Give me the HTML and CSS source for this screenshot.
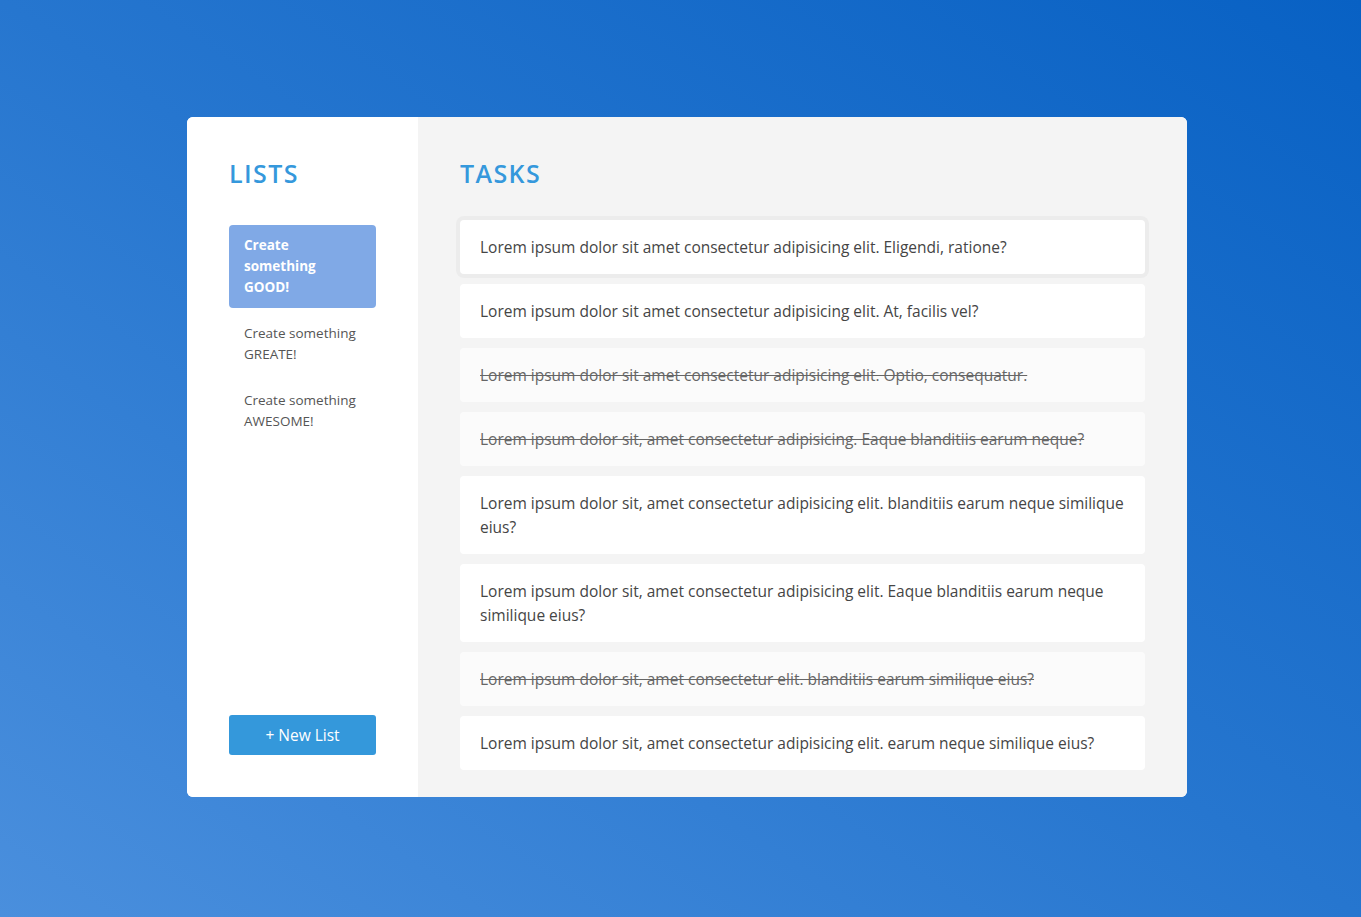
FILE: index.html
```html
<!DOCTYPE html>
<html lang="en">
<head>
<meta charset="utf-8">
<title>Todo</title>
<link rel="stylesheet" href="styles.css">
</head>
<body>
<main class="app">
  <aside class="sidebar">
    <h2 class="heading">LISTS</h2>
    <ul class="lists">
      <li class="list-item active">Create something GOOD!</li>
      <li class="list-item">Create something GREATE!</li>
      <li class="list-item">Create something AWESOME!</li>
    </ul>
    <button class="new-list">+ New List</button>
  </aside>
  <section class="tasks">
    <h2 class="heading">TASKS</h2>
    <ul class="task-list">
      <li class="task focus">Lorem ipsum dolor sit amet consectetur adipisicing elit. Eligendi, ratione?</li>
      <li class="task">Lorem ipsum dolor sit amet consectetur adipisicing elit. At, facilis vel?</li>
      <li class="task done">Lorem ipsum dolor sit amet consectetur adipisicing elit. Optio, consequatur.</li>
      <li class="task done">Lorem ipsum dolor sit, amet consectetur adipisicing. Eaque blanditiis earum neque?</li>
      <li class="task">Lorem ipsum dolor sit, amet consectetur adipisicing elit. blanditiis earum neque similique eius?</li>
      <li class="task">Lorem ipsum dolor sit, amet consectetur adipisicing elit. Eaque blanditiis earum neque similique eius?</li>
      <li class="task done">Lorem ipsum dolor sit, amet consectetur elit. blanditiis earum similique eius?</li>
      <li class="task">Lorem ipsum dolor sit, amet consectetur adipisicing elit. earum neque similique eius?</li>
    </ul>
  </section>
</main>
</body>
</html>
```

FILE: styles.css
```css
* { box-sizing: border-box; }
html, body { height: 100%; }
body {
  margin: 0;
  padding: 0 0 3px 13px;
  display: flex;
  align-items: center;
  justify-content: center;
  background: linear-gradient(to top right, #4a8fdd 0%, #2676cf 50%, #0861c4 100%);
  font-family: "Open Sans", "Noto Sans", sans-serif;
}
.app {
  width: 1000px;
  height: 680px;
  display: flex;
  border-radius: 6px;
  overflow: hidden;
  background: #fff;
}
.sidebar {
  width: 231px;
  flex: none;
  padding: 42px;
  display: flex;
  flex-direction: column;
  background: #fff;
}
.heading {
  margin: 0;
  height: 61px;
  line-height: 28px;
  font-size: 25px;
  font-weight: 600;
  letter-spacing: 1.4px;
  color: #3598dc;
}
.lists {
  list-style: none;
  margin: 5px 0 0;
  padding: 0;
}
.list-item {
  padding: 10px 15px;
  margin-bottom: 5px;
  font-size: 13.5px;
  line-height: 21px;
  color: #555;
  border-radius: 4px;
}
.list-item.active {
  background: #80a9e6;
  color: #fff;
  font-weight: 700;
}
.new-list {
  margin-top: auto;
  height: 40px;
  border: none;
  border-radius: 3px;
  background: #3498db;
  color: #fff;
  font-family: inherit;
  font-size: 15.5px;
}
.tasks {
  flex: 1;
  padding: 42px;
  background: #f4f4f4;
}
.task-list {
  list-style: none;
  margin: 0;
  padding: 0;
  display: flex;
  flex-direction: column;
  gap: 10px;
}
.task {
  padding: 15px 20px;
  font-size: 15.5px;
  line-height: 24px;
  color: #454545;
  background: #fff;
  border-radius: 4px;
}
.task.focus {
  box-shadow: 0 0 0 4px #ececec;
}
.task.done {
  background: #fbfbfb;
  color: #666;
  text-decoration: line-through;
}
```
